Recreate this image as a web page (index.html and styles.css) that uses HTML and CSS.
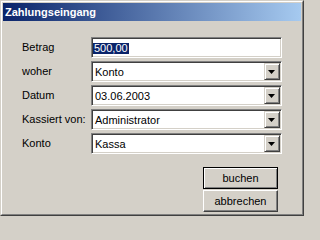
FILE: index.html
```html
<!DOCTYPE html>
<html lang="de">
<head>
<meta charset="utf-8">
<title>Zahlungseingang</title>
<link rel="stylesheet" href="styles.css">
</head>
<body>
<div class="window">
  <div class="frame">
    <div class="titlebar"><span class="title">Zahlungseingang</span></div>
    <div class="content">
      <div class="form">
        <div class="label">Betrag</div>
        <div class="field edit"><span class="sel">500,00</span></div>

        <div class="label">woher</div>
        <div class="field combo"><span class="value">Konto</span><span class="drop"><svg width="7" height="4" viewBox="0 0 7 4"><polygon points="0,0 7,0 3.5,4" fill="#000"/></svg></span></div>

        <div class="label">Datum</div>
        <div class="field combo"><span class="value">03.06.2003</span><span class="drop"><svg width="7" height="4" viewBox="0 0 7 4"><polygon points="0,0 7,0 3.5,4" fill="#000"/></svg></span></div>

        <div class="label">Kassiert von:</div>
        <div class="field combo"><span class="value">Administrator</span><span class="drop"><svg width="7" height="4" viewBox="0 0 7 4"><polygon points="0,0 7,0 3.5,4" fill="#000"/></svg></span></div>

        <div class="label">Konto</div>
        <div class="field combo"><span class="value">Kassa</span><span class="drop"><svg width="7" height="4" viewBox="0 0 7 4"><polygon points="0,0 7,0 3.5,4" fill="#000"/></svg></span></div>
      </div>
      <div class="buttons">
        <button class="btn btn-default">buchen</button>
        <button class="btn">abbrechen</button>
      </div>
    </div>
  </div>
</div>
</body>
</html>
```

FILE: styles.css
```css
html, body {
  margin: 0;
  padding: 0;
  background: #d4d0c8;
}

body {
  font-family: "Liberation Sans", Arial, sans-serif;
  font-size: 11px;
  color: #000;
}

.window {
  width: 304px;
  height: 216px;
  box-sizing: border-box;
  border: 1px solid;
  border-color: #d4d0c8 #404040 #404040 #d4d0c8;
  background: #d4d0c8;
}

.frame {
  height: 100%;
  box-sizing: border-box;
  border: 1px solid;
  border-color: #ffffff #808080 #808080 #ffffff;
  padding: 1px;
  display: flex;
  flex-direction: column;
}

.titlebar {
  height: 18px;
  flex: none;
  background: linear-gradient(to right, #0a246a, #a6caf0);
  padding-left: 2px;
  display: flex;
  align-items: center;
}

.title {
  color: #ffffff;
  font-weight: bold;
  font-size: 11px;
  line-height: 18px;
  white-space: nowrap;
}

.content {
  flex: 1;
  padding: 16px 0 0 19px;
  display: flex;
  flex-direction: column;
}

.form {
  display: grid;
  grid-template-columns: 69px 191px;
  grid-auto-rows: 21px;
  row-gap: 3px;
}

.label {
  line-height: 21px;
  white-space: nowrap;
}

.field {
  box-sizing: border-box;
  height: 21px;
  background: #ffffff;
  border: 1px solid;
  border-color: #808080 #ffffff #ffffff #808080;
  box-shadow: inset 1px 1px 0 #404040, inset -1px -1px 0 #d4d0c8;
  padding: 1px;
  display: flex;
  align-items: stretch;
}

.edit {
  padding-left: 1px;
  align-items: center;
}

.sel {
  background: #0a246a;
  color: #ffffff;
  padding: 0 1px;
  line-height: 11px;
  height: 11px;
  margin-top: 1px;
}

.value {
  flex: 1;
  line-height: 17px;
  padding: 1px 0 0 2px;
  box-sizing: border-box;
  white-space: nowrap;
  overflow: hidden;
}

.drop {
  flex: none;
  width: 16px;
  height: 17px;
  box-sizing: border-box;
  background: #d4d0c8;
  border: 1px solid;
  border-color: #d4d0c8 #404040 #404040 #d4d0c8;
  box-shadow: inset 1px 1px 0 #ffffff, inset -1px -1px 0 #808080;
  display: flex;
  align-items: center;
  justify-content: center;
}

.drop svg {
  display: block;
  margin-left: -1px;
}

.buttons {
  margin-top: 13px;
  padding-right: 23px;
  display: flex;
  flex-direction: column;
  align-items: flex-end;
  gap: 1px;
}

.btn {
  width: 75px;
  height: 22px;
  box-sizing: border-box;
  margin: 0;
  padding: 0;
  font-family: "Liberation Sans", Arial, sans-serif;
  font-size: 11px;
  color: #000;
  background: #d4d0c8;
  border: 1px solid;
  border-color: #ffffff #404040 #404040 #ffffff;
  box-shadow: inset -1px -1px 0 #808080;
}

.btn-default {
  border-color: #000000;
  box-shadow: inset 1px 1px 0 #ffffff, inset -1px -1px 0 #808080;
}
```
